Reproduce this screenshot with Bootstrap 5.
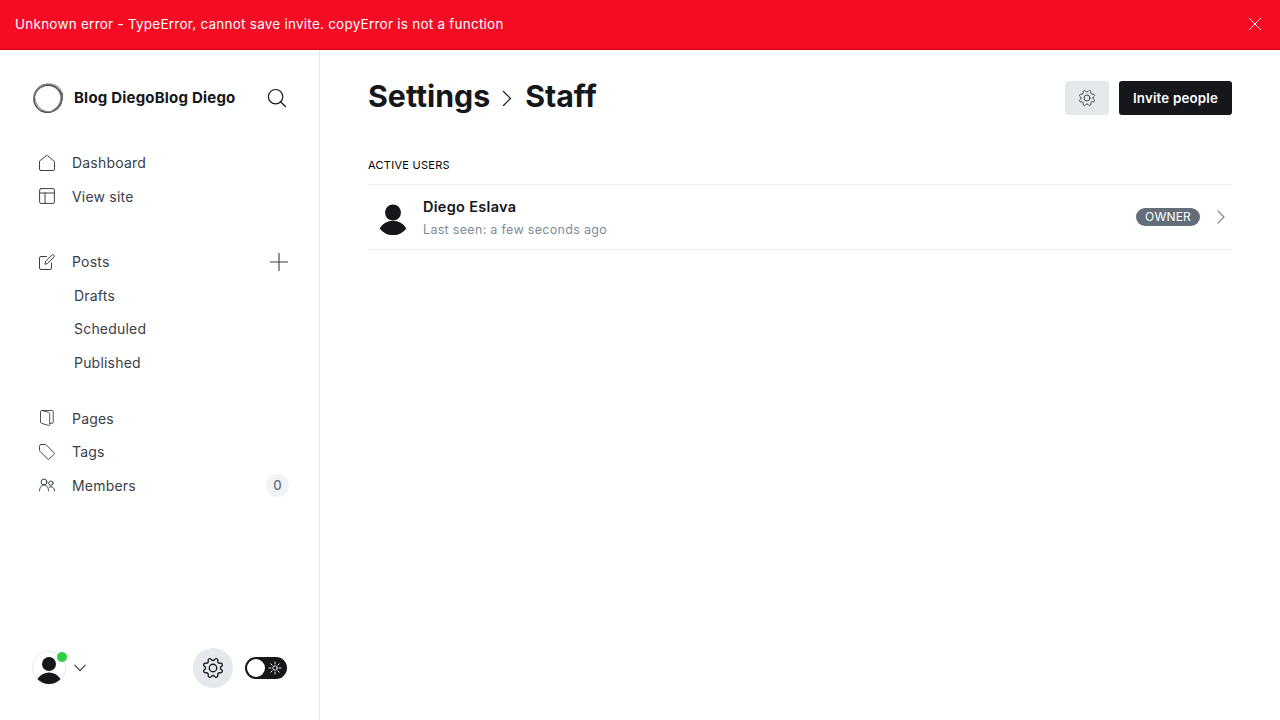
<!DOCTYPE html>
<html lang="en">
<head>
<meta charset="utf-8">
<meta name="viewport" content="width=device-width, initial-scale=1">
<title>Settings - Staff</title>
<link href="https://cdn.jsdelivr.net/npm/bootstrap@5.3.0/dist/css/bootstrap.min.css" rel="stylesheet">
<style>
body{font-family:Inter,sans-serif;color:#15171a;letter-spacing:.2px;font-size:14px;line-height:1.5;height:100vh;overflow:hidden;background:#fff;fill:none;stroke:currentColor;stroke-linecap:round;stroke-linejoin:round}
svg{display:block;flex:none}
.notice{height:50px;background:#f50b23;border-bottom:1px solid #c8001a;color:#fff;font-size:13.5px;padding:0 18px 2px 15px;letter-spacing:.24px}
.notice span{padding-top:1px}
.sidebar{width:320px;border-right:1px solid #e5e7e9;padding:31px 30px 32px 32px;color:#394047}
.site-head{height:34px;margin-bottom:31px;color:#15171a}
.site-name{font-size:15px;font-weight:700;letter-spacing:.2px;margin-left:10px}
.menu-list{list-style:none;margin:0;padding:0}
.menu-list a{height:33.5px;color:#394047;text-decoration:none;padding-left:7px}
.menu-list a>span{margin-left:17px}
.menu-list .sub{padding-left:25px}
.menu-last{margin-top:22.6px}
.count{width:23px;height:23px;background:#f1f3f4;color:#626d79;font-size:13px;font-weight:500;padding-top:1px}
.avatar{width:34px;height:34px;border:1px solid #e5e9ed}
.dot{width:12px;height:12px;background:#30cf43;border:1px solid #fff;top:-1px;right:-3px}
.cog-btn{width:40px;height:40px;background:#e5e9ed}
.toggle{width:42px;height:22px;background:#15171a;padding:0 5px 0 2px;margin:0 2px 0 12px;color:#fff}
.knob{width:18px;height:18px;background:#fff}
.content{padding:31px 48px 0}
.title{font-size:30.3px;font-weight:700;letter-spacing:0;line-height:34px;margin:0;padding-bottom:5px}
.crumb{margin:0 13px 0 12px}
.btn-cog{width:44px;height:34px;background:#e5e9ed;color:#394047;border-radius:3px}
.btn-invite{width:113px;height:34px;background:#15171a;color:#fff;font-size:13.3px;font-weight:600;border-radius:3px;letter-spacing:.2px;margin-left:10px}
.btn-invite span{display:block;padding-top:1px}
.btn-invite:hover{background:#15171a;color:#fff}
.page-head{height:34px}
.section-label{font-size:11px;letter-spacing:.28px;text-transform:uppercase;line-height:16px;margin-top:42px;margin-bottom:11px;color:#000}
.user{height:66px;border-top:1px solid #ebeef0;border-bottom:1px solid #ebeef0;padding:0 6px 0 10px}
.user-text{margin-left:15px;padding-top:3px}
.user-name{font-size:14.5px;font-weight:600;line-height:22px;letter-spacing:.3px}
.seen{font-size:12.5px;color:#7c8b9a;line-height:23px;letter-spacing:.31px}
.role{width:64px;height:18px;background:#626d79;color:#fff;font-size:12px;letter-spacing:.2px;margin-right:16px}
</style>
</head>
<body class="d-flex flex-column">
<svg width="0" height="0" class="position-absolute" aria-hidden="true">
<symbol id="cog" viewBox="0 0 24 24" overflow="visible"><path d="M10.546 2.438a1.957 1.957 0 0 0 2.908 0L14.4 1.4a1.959 1.959 0 0 1 3.41 1.413l-.071 1.4a1.958 1.958 0 0 0 2.051 2.054l1.4-.071a1.959 1.959 0 0 1 1.41 3.41l-1.042.94a1.96 1.96 0 0 0 0 2.909l1.042.94a1.959 1.959 0 0 1-1.413 3.41l-1.4-.071a1.958 1.958 0 0 0-2.056 2.056l.071 1.4A1.959 1.959 0 0 1 14.4 22.6l-.941-1.041a1.959 1.959 0 0 0-2.908 0l-.946 1.04a1.959 1.959 0 0 1-3.41-1.413l.071-1.4a1.958 1.958 0 0 0-2.056-2.056l-1.4.071A1.958 1.958 0 0 1 1.4 14.4l1.041-.94a1.96 1.96 0 0 0 0-2.909L1.4 9.606A1.958 1.958 0 0 1 2.809 6.2l1.4.071a1.958 1.958 0 0 0 2.058-2.06L6.2 2.81A1.959 1.959 0 0 1 9.606 1.4z"/><circle cx="12" cy="12" r="4.5"/></symbol>
</svg>

<div class="notice d-flex align-items-center justify-content-between flex-shrink-0">
  <span>Unknown error - TypeError, cannot save invite. copyError is not a function</span>
  <svg width="14" height="14" viewBox="0 0 14 14" stroke-width=".9"><path d="M1.2 1.2l11.6 11.6M12.8 1.2L1.2 12.8"/></svg>
</div>

<div class="d-flex flex-grow-1">
  <nav class="sidebar d-flex flex-column flex-shrink-0">
    <div class="site-head d-flex align-items-center">
      <svg width="32" height="32" viewBox="0 0 32 32">
        <path fill="#aaa" stroke="none" d="M12 2.500C18-.5 27 2 30 9c2.500 8-2 17-10 20 6-4 9-10 8.500-17C27 5 19 2 12 4z"/>
        <circle cx="15.500" cy="16.300" r="13.700" stroke-width="1.700" stroke="#888"/>
        <ellipse cx="15.600" cy="16.800" rx="14.400" ry="13.500" stroke="#444" stroke-width=".9" transform="rotate(-35 16 16)"/>
        <ellipse cx="16.300" cy="15.700" rx="14.500" ry="13.200" stroke-width=".8" stroke="#777" transform="rotate(50 16 16)"/>
        <path d="M16 3.500c6 0 11 4 13 9M30.500 11c1 8-3 14-9.500 17" stroke-width=".8" stroke="#555"/>
      </svg>
      <span class="site-name">Blog DiegoBlog Diego</span>
      <svg class="ms-auto me-0" width="24" height="24" viewBox="0 0 24 24" stroke-width="1.200"><circle cx="10.600" cy="10.700" r="7.200"/><path d="M15.800 16l4.700 4.500"/></svg>
    </div>
    <ul class="menu-list">
      <li><a href="#" class="d-flex align-items-center"><svg width="16" height="16" viewBox="0 0 16 16"><path d="M.5 6.500V14q0 1.500 1.500 1.500h12q1.500 0 1.500-1.500V6.500L8.600.7q-.6-.4-1.200 0z"/></svg><span>Dashboard</span></a></li>
      <li><a href="#" class="d-flex align-items-center"><svg width="16" height="16" viewBox="0 0 16 16"><rect x=".6" y=".6" width="14.800" height="14.800" rx="1.500"/><path d="M.6 5h14.800M6 5v10.400"/></svg><span>View site</span></a></li>
    </ul>
    <ul class="menu-list mt-4 pt-2">
      <li><a href="#" class="d-flex align-items-center"><svg width="16" height="16" viewBox="0 0 16 16"><path d="M7.500 2.500H2Q.5 2.500.5 4v10q0 1.500 1.500 1.500h9q1.500 0 1.500-1.500V9M6 9.900l.7-2.800L13 .9q.8-.7 1.600 0l.5.5q.8.800 0 1.600L8.700 9.200z"/></svg><span>Posts</span>
        <svg class="ms-auto" width="20" height="20" viewBox="0 0 20 20" stroke="#394047" stroke-width="1.100" stroke-linecap="butt"><path d="M10 1v18M1 10h18"/></svg></a></li>
      <li><a href="#" class="sub d-flex align-items-center"><span>Drafts</span></a></li>
      <li><a href="#" class="sub d-flex align-items-center"><span>Scheduled</span></a></li>
      <li><a href="#" class="sub d-flex align-items-center"><span>Published</span></a></li>
    </ul>
    <ul class="menu-list menu-last">
      <li><a href="#" class="d-flex align-items-center"><svg width="16" height="16" viewBox="0 0 16 16" stroke-width=".9"><path d="M2.500.5h10.700q1 0 1 1v10.800q0 1-1 1H11M2.500.5q-1 0-1 1V12q0 1 .9 1.300l7 2.100q1.300.3 1.300-1V3.700q0-1-1-1.300z"/></svg><span>Pages</span></a></li>
      <li><a href="#" class="d-flex align-items-center"><svg width="16" height="16" viewBox="0 0 16 16"><path d="M.5 2Q.5.500 2 .500h4.200q.6 0 1 .4l7.900 7.900q.7.700 0 1.400l-4.900 4.900q-.7.700-1.400 0L.9 7.200q-.4-.4-.4-1z"/></svg><span>Tags</span></a></li>
      <li><a href="#" class="d-flex align-items-center"><svg width="16" height="16" viewBox="0 0 16 16" stroke-width="1"><circle cx="5" cy="5" r="2.900"/><circle cx="11.900" cy="6.200" r="2.200"/><path d="M.5 13.800c.2-7.800 8.900-7.800 9.100 0M10.300 10.200c2.400-1.300 5.100.1 5.200 3.600"/></svg><span>Members</span><span class="count rounded-circle d-flex align-items-center justify-content-center ms-auto">0</span></a></li>
    </ul>
    <div class="d-flex align-items-center mt-auto">
      <div class="avatar rounded-circle position-relative">
        <svg width="32" height="32" viewBox="0 0 32 32" stroke="none"><circle cx="16" cy="12" r="7" fill="#15171a"/><path d="M4.400 27a13.500 13.500 0 0 1 23.200 0A16 16 0 0 1 4.400 27z" fill="#15171a"/></svg>
        <span class="dot rounded-circle position-absolute"></span>
      </div>
      <svg class="ms-2" width="12" height="8" viewBox="0 0 12 8" stroke-width="1.200"><path d="M.8 1.200L6 6.700l5.200-5.500"/></svg>
      <div class="cog-btn rounded-circle d-flex align-items-center justify-content-center ms-auto"><svg width="20" height="20" stroke="#15171a" stroke-width="1.600" overflow="visible"><use href="#cog"/></svg></div>
      <div class="toggle rounded-pill d-flex align-items-center justify-content-between"><span class="knob rounded-circle"></span>
        <svg width="14" height="14" viewBox="0 0 14 14" stroke-width=".9"><circle cx="7" cy="7" r="2.200"/><path d="M7 1v2M7 11v2M1 7h2M11 7h2M2.800 2.800l1.400 1.400M9.800 9.800l1.400 1.400M2.800 11.200l1.400-1.400M9.800 4.200l1.400-1.400"/></svg></div>
    </div>
  </nav>

  <main class="content flex-grow-1">
    <div class="page-head d-flex align-items-center">
      <h1 class="title">Settings</h1>
      <svg class="crumb" width="10" height="16" viewBox="0 0 10 16" stroke-width="1.200"><path d="M1.500 1.500l7 7-7 7"/></svg>
      <h1 class="title">Staff</h1>
      <button class="btn btn-cog d-flex align-items-center justify-content-center p-0 ms-auto border-0" aria-label="Settings"><svg width="16" height="16" stroke-width="1.400" overflow="visible"><use href="#cog"/></svg></button>
      <button class="btn btn-invite p-0 border-0"><span>Invite people</span></button>
    </div>
    <div class="section-label">Active users</div>
    <div class="user d-flex align-items-center">
      <svg width="30" height="36" viewBox="0 0 30 36" stroke="none"><circle cx="15" cy="13.500" r="8" fill="#15171a"/><path d="M1.600 29.500a15.500 15.500 0 0 1 26.800 0 16.700 16.700 0 0 1-26.800 0z" fill="#15171a"/></svg>
      <div class="user-text"><div class="user-name">Diego Eslava</div><div class="seen">Last seen: a few seconds ago</div></div>
      <span class="role rounded-pill d-flex align-items-center justify-content-center ms-auto">OWNER</span>
      <svg width="10" height="14" viewBox="0 0 10 14" stroke="#7c8b9a" stroke-width="1.200"><path d="M2 1l6 6-6 6"/></svg>
    </div>
  </main>
</div>
<script src="https://cdn.jsdelivr.net/npm/bootstrap@5.3.0/dist/js/bootstrap.bundle.min.js"></script>
</body>
</html>
